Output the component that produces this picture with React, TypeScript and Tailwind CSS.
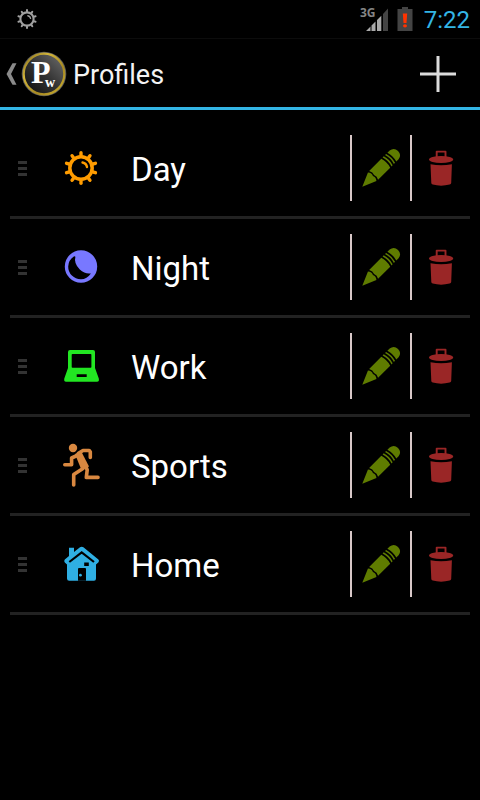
import React from "react";

function SunIcon({ className }: { className: string }) {
  const teeth = [0, 36, 72, 108, 144, 180, 216, 252, 288, 324];
  return (
    <svg viewBox="-2 -2 44 44" className={className} fill="none" stroke="currentColor" strokeLinecap="round">
      <circle cx="20" cy="20" r="11.2" strokeWidth="3.5" />
      {teeth.map((angle) => (
        <path key={angle} d="M20 7V4.8" strokeWidth="3.4" transform={`rotate(${angle} 20 20)`} />
      ))}
      <path d="M21.5 14.5C24.5 15 25.7 17 26 19" strokeWidth="2.4" />
    </svg>
  );
}

function MoonIcon({ className }: { className: string }) {
  return (
    <svg viewBox="-2 -2 44 44" className={className}>
      <circle cx="20" cy="19.5" r="16.2" fill="currentColor" />
      <path d="M12.8 9.6A12.6 12.6 0 0 0 7.2 19.5A12.6 12.6 0 0 0 20 32.3Q26 32 29.9 26.4Q24 27.3 18.8 22.6Q12.6 16.5 14.4 9.8Q13.8 9 12.8 9.6Z" fill="#000" />
    </svg>
  );
}

function LaptopIcon({ className }: { className: string }) {
  return (
    <svg viewBox="-2 -2 44 44" className={className} fill="currentColor" fillRule="evenodd">
      <path d="M9 4H32Q34 4 34 6V22L37.8 32.5Q38.5 35.7 36 35.7H5Q2.7 35.7 3.3 32.5L7 22V6Q7 4 9 4ZM11.5 8Q10.7 8 10.7 8.8V21Q10.7 21.8 11.5 21.8H29.6Q30.4 21.8 30.4 21V8.8Q30.4 8 29.6 8ZM15.7 28.3V31H25.7V28.3Z" />
    </svg>
  );
}

function RunnerIcon({ className }: { className: string }) {
  return (
    <svg viewBox="-2 -2 44 44" className={className} fill="none" stroke="currentColor" strokeWidth="3.6" strokeLinecap="round" strokeLinejoin="round">
      <circle cx="12" cy="3" r="4.2" fill="currentColor" stroke="none" />
      <path d="M14 9L20 6L28 21.5L20.7 25.5Z" fill="currentColor" stroke="none" />
      <path d="M16 10.5L10.6 13V19.7H3.8" />
      <path d="M17.5 8.3L22 5.5H28.2L29.3 6.8V12.5" />
      <path d="M22 23.5L12.7 29.5V40" />
      <path d="M24.3 20L26.2 25L25.3 32.4H37" />
    </svg>
  );
}

function HouseIcon({ className }: { className: string }) {
  return (
    <svg viewBox="-2 -2 44 44" className={className}>
      <path d="M8 3.8H13V8L19 3.2Q20.7 2.2 22.4 3.2L37.4 15.5Q38.6 16.8 37.5 18.2L35 20.5V34.5Q35 36.7 33 36.7H8.2Q6 36.7 6 34.5V20.5L3.8 18.5Q2.6 16.8 3.8 15.5L8 12Z" fill="currentColor" />
      <path d="M8.3 18L20.7 8.3L33 18" fill="none" stroke="#000" strokeWidth="2.2" />
      <path d="M23.2 18.5H27.8V22H23.2ZM17 34.5V25Q17 24 18 24H24Q25 24 25 25V36.7H17Z" fill="#000" />
      <circle cx="19.4" cy="31.2" r="1.4" fill="currentColor" />
    </svg>
  );
}

function PencilIcon() {
  return (
    <svg viewBox="-2 -2 44 44" className="size-11 text-[#5f7c00]" fill="currentColor" aria-hidden="true">
      <g transform="translate(1.3 38.7) rotate(-45)">
        <path d="M0 0L14 -6Q16.5 -3 15 0Q16.5 3 14 6Z" />
        <path d="M16 -6.3H33.2Q35.2 0 33.2 6.3H16Q18 3 16.6 0Q18 -3 16 -6.3Z" />
        <path d="M35 -6.3H36.6Q38.6 0 36.6 6.3H35Q37 0 35 -6.3Z" />
        <path d="M38.4 -6.3H40Q42 0 40 6.3H38.4Q40.4 0 38.4 -6.3Z" />
        <path d="M41.8 -6.3H45Q50.5 -5.5 50.5 0Q50.5 5.5 45 6.3H41.8Q43.8 0 41.8 -6.3Z" />
      </g>
    </svg>
  );
}

function TrashIcon() {
  return (
    <svg viewBox="-2 -2 44 44" className="size-11 text-[#9a2626]" fill="currentColor" aria-hidden="true">
      <path d="M15.7 9V3.6H24.5V9" fill="none" stroke="currentColor" strokeWidth="1.9" strokeLinejoin="round" />
      <ellipse cx="20.1" cy="11.5" rx="12.1" ry="3.5" />
      <path d="M9.5 16.2Q20 18.4 30.9 16.2L30.2 35Q30 36 28.6 36.6Q20 38.8 11.8 36.6Q10.4 36 10.3 35Z" />
    </svg>
  );
}

function Logo() {
  return (
    <svg viewBox="0 0 46 46" className="size-[46px]" aria-hidden="true">
      <defs>
        <linearGradient id="face" x1="1" y1="0" x2="0" y2="1">
          <stop offset="0" stopColor="#707070" />
          <stop offset="0.5" stopColor="#333" />
          <stop offset="1" stopColor="#0b0b0b" />
        </linearGradient>
        <linearGradient id="gold" x1="0" y1="0" x2="1" y2="1">
          <stop offset="0" stopColor="#806a1c" />
          <stop offset="0.3" stopColor="#d2b53a" />
          <stop offset="0.65" stopColor="#a58822" />
          <stop offset="1" stopColor="#cdb02f" />
        </linearGradient>
      </defs>
      <circle cx="23" cy="23" r="22.3" fill="#55565a" />
      <circle cx="23" cy="23" r="20.3" fill="url(#face)" stroke="url(#gold)" strokeWidth="2.2" />
      <text x="10" y="32" fill="#fff" fontSize="32" fontWeight="bold" fontFamily="'Liberation Serif', serif">P</text>
      <text x="24" y="36" fill="#fff" fontSize="14" fontWeight="bold" fontFamily="'Liberation Serif', serif">w</text>
    </svg>
  );
}

function SignalIcon() {
  return (
    <svg viewBox="0 0 28 24" className="h-6 w-7 overflow-visible" role="img" aria-label="3G signal">
      <path d="M5 24L9.5 19.5V24ZM10.5 24V18.5L14.5 14.5V24ZM16 24V13L20.3 8.7V24Z" fill="#aaa" />
      <path d="M22 24V7L27 1.5V24Z" fill="#444" />
      <text x="-1" y="10" fill="#858585" fontSize="12" fontWeight="bold" fontFamily="'Open Sans', sans-serif">3G</text>
    </svg>
  );
}

function BatteryIcon() {
  return (
    <svg viewBox="0 0 16 24" className="h-6 w-4" role="img" aria-label="Battery low">
      <path d="M5 0H11V2H15.5V24H0.5V2H5Z" fill="#444" />
      <path d="M5.8 6.5H10.2L9.5 16H6.5Z" fill="#ff3300" />
      <ellipse cx="8" cy="18.8" rx="2" ry="1.6" fill="#ff3300" />
    </svg>
  );
}

const profiles = [
  { name: "Day", icon: <SunIcon className="size-11 text-[#ff9c00]" /> },
  { name: "Night", icon: <MoonIcon className="size-11 text-[#7878ff]" /> },
  { name: "Work", icon: <LaptopIcon className="size-11 text-[#22e622]" /> },
  { name: "Sports", icon: <RunnerIcon className="size-11 text-[#d98840]" /> },
  { name: "Home", icon: <HouseIcon className="size-11 text-[#2fafe3]" /> },
];

export default function App() {
  return (
    <div className="min-h-screen bg-black font-[Roboto,sans-serif] text-white">
      <div className="flex h-[39px] items-center border-b border-[#0c0c0c] pr-[10px] pl-[14px]">
        <SunIcon className="size-[26px] text-[#a0a0a0]" />
        <div className="ml-auto flex items-center">
          <SignalIcon />
          <span className="ml-2">
            <BatteryIcon />
          </span>
          <span className="ml-[11px] pt-px text-2xl leading-6 text-[#33b5e5]">7:22</span>
        </div>
      </div>

      <header className="flex h-[71px] items-center border-b-3 border-[#33b5e5] pt-px pr-6 pl-[6px]">
        <button className="flex items-center" aria-label="Back">
          <svg viewBox="0 0 11 22" className="mr-1 h-[22px] w-[11px]" fill="#8a8a8a" aria-hidden="true">
            <path d="M6.5 0.3H10.5L5 11L10.5 21.7H6.5L0.5 11Z" />
          </svg>
          <Logo />
        </button>
        <h1 className="ml-[6px] pt-[3px] text-[27px] leading-8 text-[#f3f3f3]">Profiles</h1>
        <button className="ml-auto" aria-label="Add profile">
          <svg viewBox="0 0 36 36" className="size-9" stroke="#dcdcdc" strokeWidth="3" aria-hidden="true">
            <path d="M18 0V36M0 18H36" />
          </svg>
        </button>
      </header>

      <ul className="px-[10px] pt-[10px]">
        {profiles.map((profile) => (
          <li key={profile.name} className="flex items-center border-b-3 border-[#222] py-[15px] pl-2">
            <button className="flex w-[9px] flex-col gap-[3px]" aria-label={`Move ${profile.name}`}>
              <span className="h-[3px] w-full bg-[#333]" />
              <span className="h-[3px] w-full bg-[#333]" />
              <span className="h-[3px] w-full bg-[#333]" />
            </button>
            <span className="ml-8">{profile.icon}</span>
            <span className="ml-7 flex-1 pt-1 text-[33px] leading-10">{profile.name}</span>
            <button className="flex h-[66px] w-[62px] items-center justify-center border-x-2 border-[#d8c8c8]" aria-label={`Edit ${profile.name}`}>
              <PencilIcon />
            </button>
            <button className="flex h-[66px] w-[58px] items-center justify-center" aria-label={`Delete ${profile.name}`}>
              <TrashIcon />
            </button>
          </li>
        ))}
      </ul>
    </div>
  );
}
